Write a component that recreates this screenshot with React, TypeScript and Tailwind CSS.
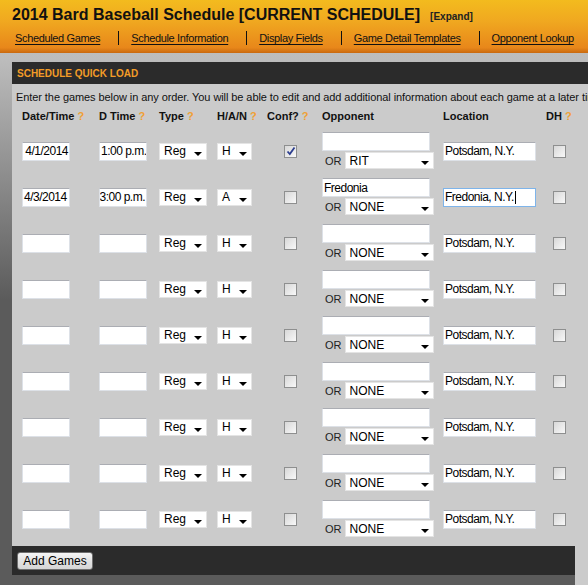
import React from "react";

type Row = {
  date?: string;
  dateEnd?: boolean;
  time?: string;
  timeEnd?: boolean;
  han: string;
  conf?: boolean;
  opp?: string;
  oppSel: string;
  loc: string;
  focused?: boolean;
};

const rows: Row[] = [
  { date: "4/1/2014", dateEnd: true, time: "1:00 p.m.", han: "H", conf: true, oppSel: "RIT", loc: "Potsdam, N.Y." },
  { date: "4/3/2014", time: "3:00 p.m.", timeEnd: true, han: "A", opp: "Fredonia", oppSel: "NONE", loc: "Fredonia, N.Y.", focused: true },
  { han: "H", oppSel: "NONE", loc: "Potsdam, N.Y." },
  { han: "H", oppSel: "NONE", loc: "Potsdam, N.Y." },
  { han: "H", oppSel: "NONE", loc: "Potsdam, N.Y." },
  { han: "H", oppSel: "NONE", loc: "Potsdam, N.Y." },
  { han: "H", oppSel: "NONE", loc: "Potsdam, N.Y." },
  { han: "H", oppSel: "NONE", loc: "Potsdam, N.Y." },
  { han: "H", oppSel: "NONE", loc: "Potsdam, N.Y." },
];

const navLinks = ["Scheduled Games", "Schedule Information", "Display Fields", "Game Detail Templates", "Opponent Lookup"];

// text box, windows-ish border
function TextBox({ value, w, alignEnd, focused }: { value?: string; w: string; alignEnd?: boolean; focused?: boolean }) {
  return (
    <div
      className={`${w} h-[19px] bg-white border flex items-center overflow-hidden whitespace-nowrap text-[12px] tracking-[-0.5px] text-black ${
        alignEnd ? "justify-end pr-[1px]" : "justify-start pl-[1px]"
      } ${focused ? "border-[#7eb4ea]" : "border-[#dde1e7] border-t-[#abadb3]"}`}
    >
      <span className="shrink-0">{value}</span>
      {focused && <span className="shrink-0 w-px h-[13px] bg-black ml-[1px]" />}
    </div>
  );
}

function Select({ value, w }: { value: string; w: string }) {
  return (
    <div className={`${w} h-[17px] bg-white border border-[#e4e4e4] flex items-center justify-between pl-[4px] pr-[4px] text-[12px] text-black`}>
      <span className="leading-none">{value}</span>
      <svg width="8" height="4" viewBox="0 0 8 4" className="mt-[5px]">
        <path d="M0 0h8L4 4z" fill="#000" />
      </svg>
    </div>
  );
}

function Check({ checked }: { checked?: boolean }) {
  return (
    <span className="w-[13px] h-[13px] border border-[#8e8f8f] bg-gradient-to-br from-[#d8d8d8] to-[#f8f8f8] flex items-center justify-center">
      {checked && (
        <svg width="10" height="10" viewBox="0 0 10 10">
          <path d="M1.5 5.5l2.3 2.5L8.5 1.5" stroke="#2c3e8f" strokeWidth="1.8" fill="none" />
        </svg>
      )}
    </span>
  );
}

const Q = () => <span className="text-[#f0a035]"> ?</span>;

const head = "font-bold pt-[5px] pb-[5px] leading-[14px]";

export default function App() {
  return (
    <div className="w-[588px] h-[585px] overflow-hidden bg-[linear-gradient(to_bottom,#bdbdbd_53px,#bcbcbc_60px,#5b5b5b_300px,#5b5b5b)] font-['Liberation_Sans',Arial,sans-serif]">
      {/* Header */}
      <div className="h-[53px] bg-[linear-gradient(to_bottom,#f3bb1e,#f0a820_40%,#e8871a_90%,#c9690f)] pl-[12px] pt-[5px]">
        <div className="flex items-baseline whitespace-nowrap leading-[20px]">
          <span className="text-[16px] font-bold text-[#111]">2014 Bard Baseball Schedule [CURRENT SCHEDULE]</span>
          <span className="ml-[10px] text-[10px] font-bold text-[#222]">[Expand]</span>
        </div>
        <div className="flex items-center mt-[4px] ml-[3px] whitespace-nowrap text-[11px] leading-[14px] tracking-[-0.35px] text-[#111]">
          {navLinks.map((l, i) => (
            <React.Fragment key={l}>
              {i > 0 && <span className="w-px h-[14px] bg-[#111] ml-[18px] mr-[12px]" />}
              <span className="underline underline-offset-2">{l}</span>
            </React.Fragment>
          ))}
        </div>
      </div>

      {/* Panel */}
      <div className="ml-[12px] mt-[9px] w-[620px] bg-[#cbcbcb] flex flex-col">
        <div className="h-[22px] bg-[#2b2b2b] flex items-center pl-[5px]">
          <span className="text-[10px] font-bold text-[#f39c27]">SCHEDULE QUICK LOAD</span>
        </div>
        <div className="pt-[6px] pl-[4px] text-[11px] tracking-[-0.08px] text-[#111] whitespace-nowrap leading-[14px]">
          Enter the games below in any order. You will be able to edit and add additional information about each game at a later time.
        </div>
        <div className="pl-[10px] grid grid-cols-[77px_60px_58px_50px_55px_121px_103px_60px] text-[11px] text-[#111]">
          {/* headers */}
          <div className={head}>Date/Time<Q /></div>
          <div className={head}>D Time<Q /></div>
          <div className={head}>Type<Q /></div>
          <div className={head}>H/A/N<Q /></div>
          <div className={head}>Conf?<Q /></div>
          <div className={head}>Opponent</div>
          <div className={head}>Location</div>
          <div className={head}>DH<Q /></div>

          {rows.map((r, i) => (
            <React.Fragment key={i}>
              <div className="h-[46px] flex items-center">
                <TextBox value={r.date} w="w-[48px]" alignEnd={r.dateEnd} />
              </div>
              <div className="h-[46px] flex items-center">
                <TextBox value={r.time} w="w-[48px]" alignEnd={r.timeEnd} />
              </div>
              <div className="h-[46px] flex items-center">
                <Select value="Reg" w="w-[48px]" />
              </div>
              <div className="h-[46px] flex items-center">
                <Select value={r.han} w="w-[35px]" />
              </div>
              <div className="h-[46px] flex items-center pl-[17px]">
                <Check checked={r.conf} />
              </div>
              <div className="h-[46px] flex flex-col justify-center">
                <TextBox value={r.opp} w="w-[108px]" />
                <div className="flex items-center">
                  <span className="ml-[3px] mr-[3px] text-[11px] text-[#222] pt-[2px]">OR</span>
                  <Select value={r.oppSel} w="w-[89px]" />
                </div>
              </div>
              <div className="h-[46px] flex items-center">
                <TextBox value={r.loc} w="w-[93px]" focused={r.focused} />
              </div>
              <div className="h-[46px] flex items-center pl-[7px]">
                <Check />
              </div>
            </React.Fragment>
          ))}
        </div>
        <div className="h-[4px]" />
        <div className="w-[563px] h-[29px] bg-[#2b2b2b] flex items-center pl-[5px]">
          <button className="h-[18px] w-[76px] rounded-[3px] border border-[#707070] bg-[linear-gradient(to_bottom,#f6f6f6,#e2e2e2_50%,#d6d6d6)] text-[12px] text-black leading-none">
            Add Games
          </button>
        </div>
        <div className="w-[563px] h-[20px] bg-[#5b5b5b]" />
      </div>
    </div>
  );
}
